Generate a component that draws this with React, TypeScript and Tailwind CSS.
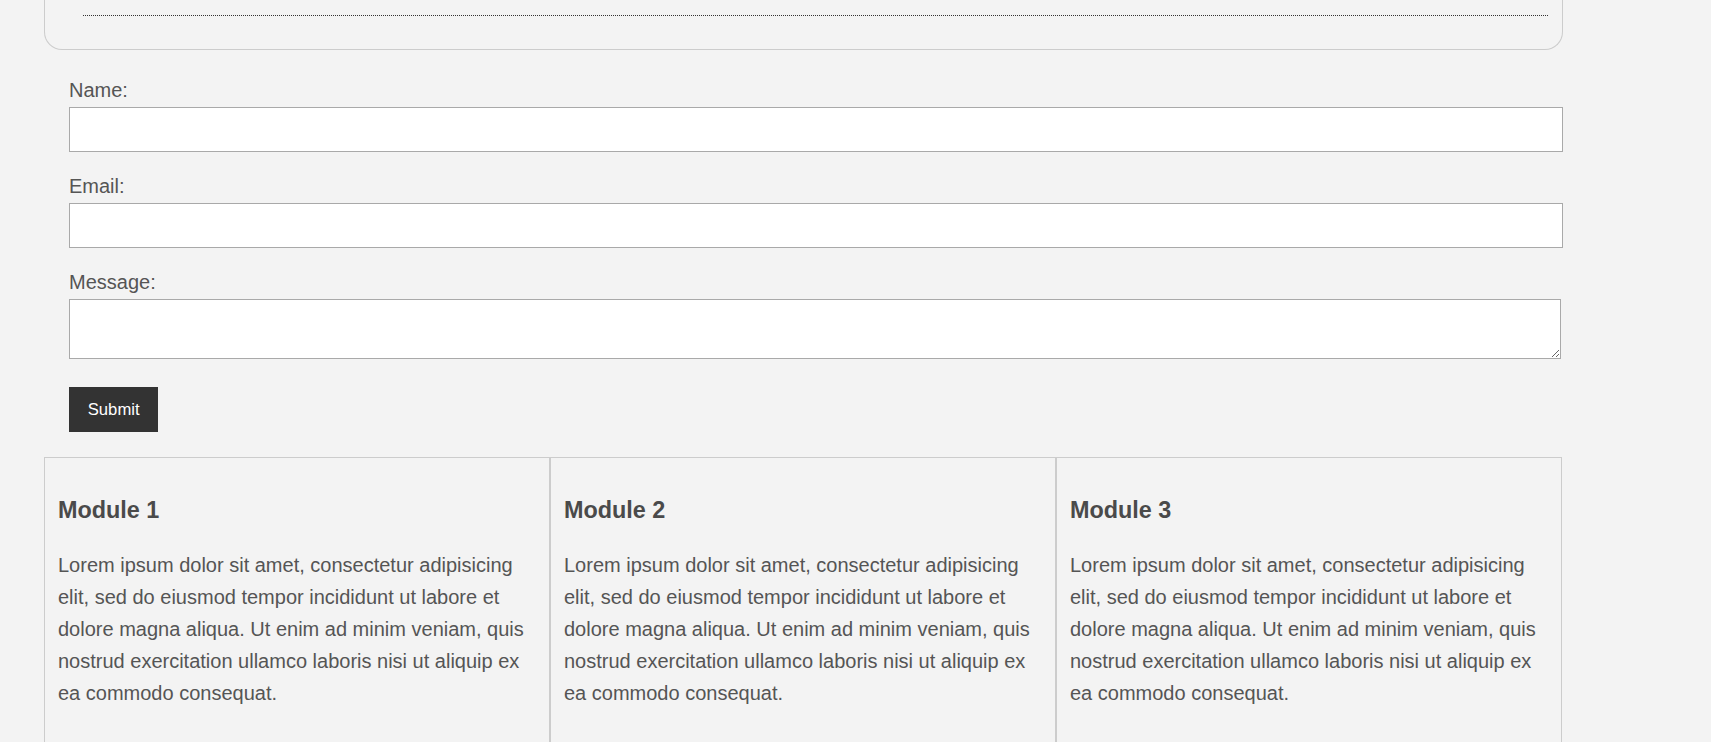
import React from "react";

const lorem =
  "Lorem ipsum dolor sit amet, consectetur adipisicing elit, sed do eiusmod tempor incididunt ut labore et dolore magna aliqua. Ut enim ad minim veniam, quis nostrud exercitation ullamco laboris nisi ut aliquip ex ea commodo consequat.";

const modules = ["Module 1", "Module 2", "Module 3"];

const Field: React.FC<{ label: string; type: string }> = ({ label, type }) => (
  <div className="mb-[23px]">
    <label className="block h-[23px] text-[20px] leading-[23px]">{label}</label>
    <input
      type={type}
      className="mt-[5px] block h-[45px] w-[1494px] border border-[#a9a9a9] bg-white px-[6px] outline-none"
    />
  </div>
);

const App: React.FC = () => {
  return (
    <div className="min-h-screen bg-[#f3f3f3] pl-[44px] pt-px font-['Liberation_Sans',Arial,sans-serif] text-[#555]">
      {/* tail of the box above, page is scrolled past its top */}
      <div className="-mt-px h-[50px] w-[1519px] rounded-b-[18px] border-x border-b border-[#cccccc] pt-[15px]">
        <div className="ml-[38px] mr-[14px] border-t border-dotted border-[#333]" />
      </div>

      <form className="ml-[25px] mt-[29px]" onSubmit={(e) => e.preventDefault()}>
        <Field label="Name:" type="text" />
        <Field label="Email:" type="email" />
        <div>
          <label className="block h-[23px] text-[20px] leading-[23px]">Message:</label>
          <textarea className="mt-[5px] block h-[60px] w-[1492px] border border-[#a9a9a9] bg-white px-[6px] outline-none" />
        </div>
        <button
          type="submit"
          className="mt-[28px] h-[45px] bg-[#333] px-[18.75px] text-[16.67px] text-white"
        >
          Submit
        </button>
      </form>

      <div className="mt-[25px] grid w-[1518px] grid-cols-3">
        {modules.map((m) => (
          <div key={m} className="border border-[#cccccc] px-[13px] pb-[60px] pt-[39px]">
            <h3 className="text-[23.4px] font-bold leading-[27px] text-[#4a4a4a]">{m}</h3>
            <p className="mt-[25px] text-[20px] leading-[32px]">{lorem}</p>
          </div>
        ))}
      </div>
    </div>
  );
};

export default App;
